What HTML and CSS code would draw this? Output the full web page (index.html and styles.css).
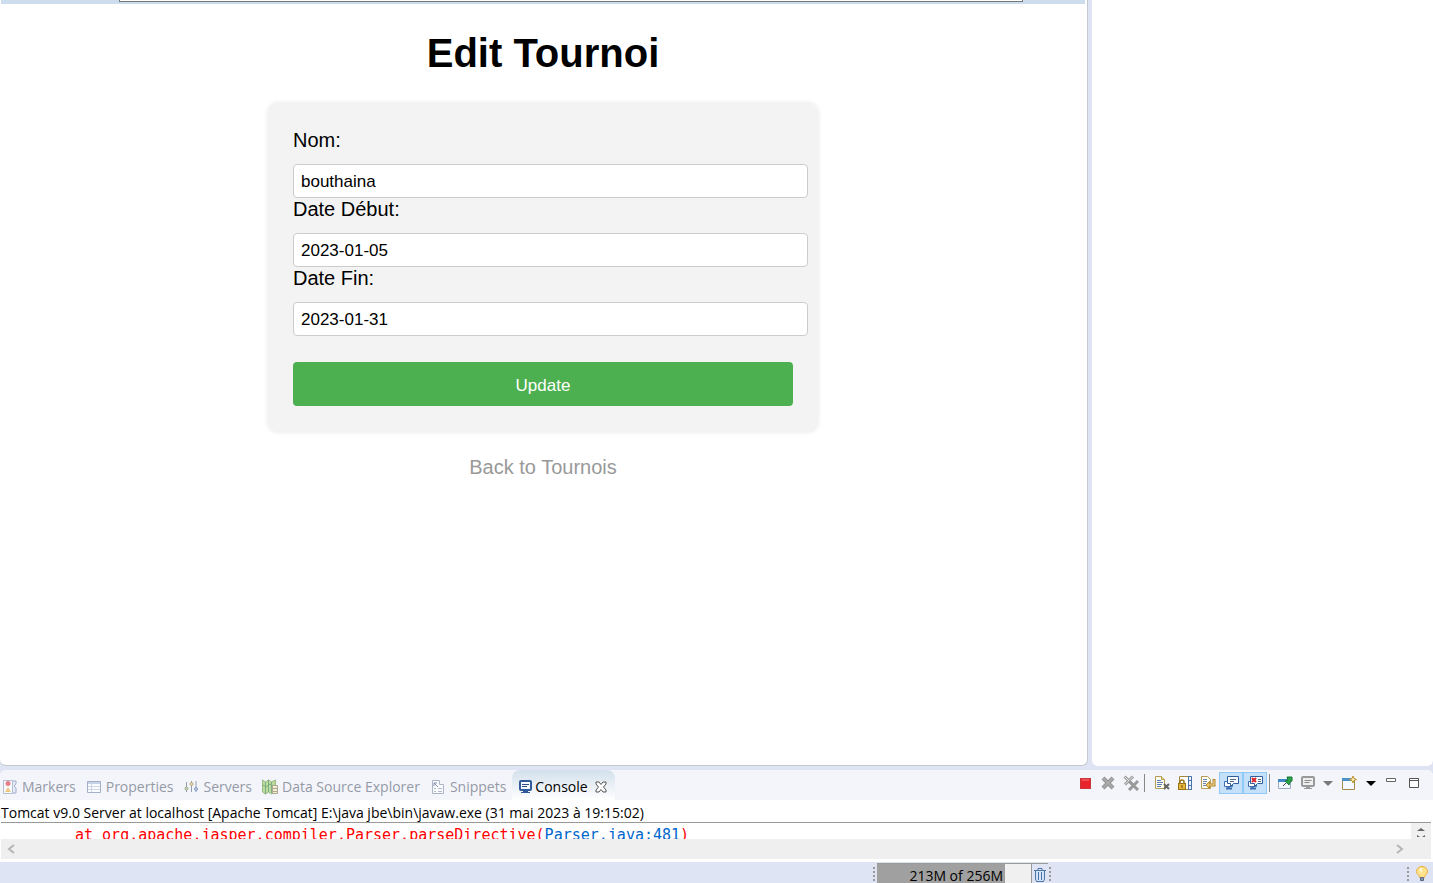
FILE: index.html
```html
<!DOCTYPE html>
<html lang="fr">
<head>
<meta charset="utf-8">
<title>Edit Tournoi</title>
<link rel="stylesheet" href="styles.css">
</head>
<body>
<div class="workbench">
  <div class="top">
    <section class="browser">
      <div class="address-strip"><div class="address-box"></div></div>
      <main class="page">
        <h1>Edit Tournoi</h1>
        <form class="card">
          <label for="nom">Nom:</label>
          <input id="nom" type="text" value="bouthaina">
          <label for="debut">Date Début:</label>
          <input id="debut" type="text" value="2023-01-05">
          <label for="fin">Date Fin:</label>
          <input id="fin" type="text" value="2023-01-31">
          <button class="update" type="button">Update</button>
        </form>
        <a class="back" href="#">Back to Tournois</a>
      </main>
    </section>
    <aside class="side"></aside>
  </div>

  <section class="console">
    <header class="tabbar">
      <nav class="tabs">
        <button class="tab" type="button">
          <svg class="dim" width="16" height="16" viewBox="0 0 16 16"><path d="M1.500 1.500h9v13h-9z" fill="#fff" stroke="#8799b8"/><path d="M11 2h3v3l-2 2 2 2v5h-3" fill="#dfe7f4" stroke="#6b7fae"/><circle cx="6" cy="4.500" r="2.500" fill="#d9343a"/><path d="M3 13l3-5 3 5z" fill="#e8a93a"/></svg>
          <span>Markers</span></button>
        <button class="tab" type="button">
          <svg class="dim" width="16" height="16" viewBox="0 0 16 16"><path d="M1.500 2.500h13v11h-13z" fill="#fff" stroke="#6d83a8"/><path d="M2 3h12v2H2z" fill="#a9bddb"/><path d="M5.500 5v8M2 7.500h12M2 10.500h12" stroke="#b5c4dc"/></svg>
          <span>Properties</span></button>
        <button class="tab" type="button">
          <svg class="dim" width="16" height="16" viewBox="0 0 16 16"><path d="M3.500 3v10M8.500 2v11M13 2v11" stroke="#56627c"/><circle cx="3.500" cy="9.500" r="1.500" fill="#b3d182" stroke="#58703d"/><circle cx="8.500" cy="5" r="1.500" fill="#efd06e" stroke="#8e732c"/><circle cx="13" cy="10" r="1.500" fill="#8eb4e0" stroke="#3f639b"/></svg>
          <span>Servers</span></button>
        <button class="tab" type="button">
          <svg class="dim" width="16" height="16" viewBox="0 0 16 16"><path d="M.5 1l3 2 3-2 3 2 4-2v12l-4 2-3-2-3 2-3-2z" fill="#9ad05a" stroke="#5b9236"/><path d="M3.500 3v12M6.500 1v12M9.500 3v11M1 6l3 2 4-3 4 2" fill="none" stroke="#2e7b38"/><path d="M10.500 6.500h5v8h-5z" fill="#f1e8bd" stroke="#817747"/><path d="M11 9.500h4M11 12.500h4" stroke="#817747"/></svg>
          <span>Data Source Explorer</span></button>
        <button class="tab" type="button">
          <svg class="dim" width="16" height="16" viewBox="0 0 16 16"><path d="M2.500 1.500h7v4h4v9h-11z" fill="#fff" stroke="#7d8aa5"/><path d="M4 4h3M4 4v3M4 4l4 4" stroke="#39527f" fill="none"/><path d="M4 9.500h2M8 9.500h4M4 12.500h2M8 12.500h4" stroke="#8893ac"/></svg>
          <span>Snippets</span></button>
        <button class="tab active" type="button">
          <svg width="16" height="16" viewBox="0 0 16 16"><rect x="3" y="2" width="11" height="9" rx="1" fill="#f4f8ff" stroke="#315a9d" stroke-width="2"/><path d="M5 5.500h7M5 7.500h5" stroke="#334f83"/><path d="M6 12h5v1h2v1H4v-1h2z" fill="#315a9d"/></svg>
          <span>Console</span>
          <svg class="close" width="12" height="12" viewBox="0 0 12 12"><path d="M1 1h3l2 2.500L8 1h3v2L8.500 6 11 9v2H8L6 8.500 4 11H1V9l2.500-3L1 3z" fill="#fff" stroke="#555"/></svg>
        </button>
      </nav>
      <div class="toolbar">
        <button type="button" aria-label="Terminate"><svg width="16" height="16" viewBox="0 0 16 16"><rect x="3.500" y="3.500" width="10" height="10" fill="#e9242d" stroke="#c9373a"/><path d="M5 5h7" stroke="#f57878"/></svg></button>
        <button type="button" aria-label="Remove launch"><svg width="16" height="16" viewBox="0 0 16 16"><path d="M3 3l10 10M13 3L3 13" stroke="#929292" stroke-width="4"/><path d="M3 3l10 10M13 3L3 13" stroke="#aaa" stroke-width="2"/></svg></button>
        <button type="button" aria-label="Remove all terminated"><svg width="16" height="16" viewBox="0 0 16 16"><path d="M1.500 1.500l8 8M10 1.500l-8 8" stroke="#999" stroke-width="3"/><path d="M1.500 1.500l8 8M10 1.500l-8 8" stroke="#eee"/><path d="M6 6l9 9M15 6l-9 9" stroke="#999" stroke-width="3"/></svg></button>
        <i class="sep"></i>
        <button type="button" aria-label="Clear console"><svg width="16" height="16" viewBox="0 0 16 16"><path d="M1.500 1.500h6l3 3v9h-9z" fill="#fffdf0" stroke="#b59a55"/><path d="M7.500 1.500v3h3" fill="#e9d79d" stroke="#b59a55"/><path d="M3 5.500h4M3 7.500h6M3 9.500h5M3 11.500h4" stroke="#5c7db0"/><path d="M10 9l5 5M15 9l-5 5" stroke="#666" stroke-width="2"/></svg></button>
        <button type="button" aria-label="Scroll lock"><svg width="16" height="16" viewBox="0 0 16 16"><path d="M2.500 1.500h12v13h-12z" fill="#fff" stroke="#a6873e"/><path d="M11.500 1.500h3v13h-3z" fill="#edf4ff" stroke="#4771a8"/><path d="M12 5.500h2M12 10.500h2" stroke="#4771a8"/><path d="M3 9V7a2 2 0 0 1 4 0v2" fill="none" stroke="#9a741d" stroke-width="1.500"/><rect x="1.500" y="8.500" width="7" height="6" fill="#e7b73d" stroke="#99701a"/><path d="M5 10v3" stroke="#765313"/></svg></button>
        <button type="button" aria-label="Word wrap"><svg width="16" height="16" viewBox="0 0 16 16"><path d="M1.500 1.500h6l3 3v9h-9z" fill="#fffdf0" stroke="#b59a55"/><path d="M3 4.500h4M3 6.500h4M3 8.500h3M3 10.500h3" stroke="#6a87b5"/><path d="M14 4v6H9" fill="none" stroke="#b6862a" stroke-width="3"/><path d="M9.500 6.500v7L6 10z" fill="#f0c65b" stroke="#b6862a"/><path d="M14 5v5H9" fill="none" stroke="#f0dc9b"/></svg></button>
        <button class="on" type="button" aria-label="Show on output"><svg width="16" height="16" viewBox="0 0 16 16"><path d="M1.500 6.500h8v5h-8z" fill="#fff" stroke="#3d6eae"/><path d="M3 13.500h6M5.500 12v1" stroke="#3d6eae" stroke-width="2"/><path d="M4.500 1.500h11v7h-5l-3 3v-3h-3z" fill="#f8fbff" stroke="#315f9d"/><path d="M7 4.500h6M7 6.500h4" stroke="#546887"/></svg></button>
        <button class="on" type="button" aria-label="Show on error"><svg width="16" height="16" viewBox="0 0 16 16"><path d="M1.500 6.500h8v5h-8z" fill="#fff" stroke="#3d6eae"/><path d="M3 13.500h6M5.500 12v1" stroke="#3d6eae" stroke-width="2"/><path d="M3.500 1.500h12v7h-5l-3 3v-3h-4z" fill="#f8fbff" stroke="#315f9d"/><path d="M5 3l4 4M9 3L5 7" stroke="#db252c" stroke-width="2"/><path d="M11 4.500h3M11 6.500h3" stroke="#546887"/></svg></button>
        <i class="sep"></i>
        <button type="button" aria-label="Pin console"><svg width="16" height="16" viewBox="0 0 16 16"><path d="M1.500 4.500h12v9h-12z" fill="#f4f9ff" stroke="#9aabc4"/><path d="M1 4h13v3H1z" fill="#4189c6"/><path d="M6 11l4-4" stroke="#444"/><path d="M10 2h5v4l-2 1-1 3-4-4 3-1z" fill="#2ba549" stroke="#187534"/></svg></button>
        <button type="button" aria-label="Display console"><svg width="16" height="16" viewBox="0 0 16 16"><rect x="2" y="2" width="12" height="9" rx="1" fill="#eee" stroke="#999" stroke-width="2"/><path d="M4.500 5.500h7M4.500 7.500h5" stroke="#888"/><path d="M6 12h4v1h2v1H4v-1h2z" fill="#999"/></svg></button>
        <button class="arrow gray" type="button" aria-label="Console list"><svg width="10" height="5" viewBox="0 0 10 5"><path d="M0 0h10L5 5z" fill="currentColor"/></svg></button>
        <button class="wide" type="button" aria-label="Open console"><svg width="16" height="16" viewBox="0 0 16 16"><path d="M1.500 3.500h12v11h-12z" fill="#f4f9ff" stroke="#a98b48"/><path d="M1 3h13v3H1z" fill="#4b91ca"/><path d="M12 1l1 2.500 2.500 1L13 5.500 12 8l-1-2.500-2.500-1 2.500-1z" fill="#fff2ac" stroke="#bd922d"/></svg></button>
        <button class="arrow" type="button" aria-label="Open console menu"><svg width="10" height="5" viewBox="0 0 10 5"><path d="M0 0h10L5 5z" fill="currentColor"/></svg></button>
        <button type="button" aria-label="Minimize"><svg width="16" height="16" viewBox="0 0 16 16"><path d="M3.500 3.500h9v3h-9z" fill="#fff" stroke="#666"/></svg></button>
        <button type="button" aria-label="Maximize"><svg width="16" height="16" viewBox="0 0 16 16"><path d="M3.500 3.500h9v9h-9zM3.500 5.500h9" fill="#fff" stroke="#555"/></svg></button>
      </div>
    </header>
    <p class="process">Tomcat v9.0 Server at localhost [Apache Tomcat] E:\java jbe\bin\javaw.exe (31 mai 2023 à 19:15:02)</p>
    <div class="output">
      <pre>at org.apache.jasper.compiler.Parser.parseDirective(<a href="#">Parser.java:481</a>)</pre>
      <div class="vscroll"><svg width="10" height="14" viewBox="0 0 10 14"><path d="M1 4l4-3 4 3z" fill="#666"/><path d="M1 8v2h3zM9 8v2H6z" fill="#666"/></svg></div>
    </div>
    <div class="hscroll">
      <svg width="8" height="10" viewBox="0 0 8 10"><path d="M7 1L2 5l5 4" fill="none" stroke="#b5b5b5" stroke-width="2"/></svg>
      <svg width="8" height="10" viewBox="0 0 8 10"><path d="M1 1l5 4-5 4" fill="none" stroke="#b5b5b5" stroke-width="2"/></svg>
    </div>
  </section>

  <footer class="status">
    <i class="grip"></i>
    <div class="heap">213M of 256M</div>
    <button class="trash" type="button" aria-label="Run garbage collector"><svg width="14" height="16" viewBox="0 0 14 16"><path d="M1 3.500h12M5 3V1.500h4V3" fill="none" stroke="#4c75aa"/><path d="M2.500 4v8l1 2.500h7l1-2.500V4" fill="#d4e2f5" stroke="#4c75aa"/><path d="M5.500 5v8M8.500 5v8" stroke="#4c75aa"/></svg></button>
    <i class="grip"></i>
    <span class="fill"></span>
    <i class="grip"></i>
    <button class="tip" type="button" aria-label="Tip"><svg width="14" height="18" viewBox="0 0 14 18"><path d="M4.500 11.500c0-3-3-3-3-6a5.500 5 0 0 1 11 0c0 3-3 3-3 6z" fill="#ffe28b" stroke="#e6ae3c"/><path d="M4 4a3 3 0 0 1 3-2v5z" fill="#fff8d9"/><path d="M5.500 11.500h3v3h-3z" fill="#8796ae" stroke="#586983"/></svg></button>
  </footer>
</div>
</body>
</html>
```
FILE: styles.css
```css
* { box-sizing: border-box; }
body { margin: 0; font-family: "Liberation Sans", Arial, sans-serif; color: #000; }
button { padding: 0; border: 0; background: none; font: inherit; color: inherit; }
svg { display: block; flex: none; }

.workbench { display: flex; flex-direction: column; height: 100vh; background: #dfe4f5; }
.top { flex: 1; min-height: 0; display: flex; gap: 4px; padding-bottom: 4px; }
.browser { flex: 1; background: #fff; border: solid #c4c8d0; border-width: 0 1px 1px 0; border-radius: 0 0 6px 6px; overflow: hidden; }
.side { flex: 0 0 341px; background: #fff; border-radius: 0 0 6px 6px; }
.address-strip { height: 4px; margin: 0 2px 0 1px; padding: 0 62px 0 118px; background: #cddded; }
.address-box { height: 2px; background: #fff; border: solid #777; border-width: 0 1px 1px; }

.page { display: flex; flex-direction: column; align-items: center; padding-right: 1px; font-size: 20px; line-height: 23px; }
h1 { margin: 26px 0 27px; font-size: 40px; line-height: 46px; }
.card { width: 550px; padding: 26px 25px; display: flex; flex-direction: column; align-items: flex-start; background: #f3f3f3; border-radius: 10px; box-shadow: 0 0 5px rgba(0, 0, 0, 0.1); }
.card label { margin-bottom: 12px; }
.card input { width: 515px; height: 34px; padding: 2px 7px 0; border: 1px solid #ccc; border-radius: 4px; background: #fff; font: 17px "Liberation Sans", Arial, sans-serif; color: #000; }
.update { width: 100%; height: 44px; margin-top: 26px; padding-top: 2px; border-radius: 4px; background: #4caf50; color: #fff; font-size: 17px; }
.back { margin-top: 24px; color: #999; text-decoration: none; }

.console { background: #fff; border-radius: 6px 6px 0 0; font-family: "Open Sans", "Noto Sans", sans-serif; padding-bottom: 3px; }
.tabbar { display: flex; justify-content: space-between; height: 30px; background: #f4f5fb; border-radius: 6px 6px 0 0; }
.tabs { display: flex; padding-left: 2px; gap: 10px; }
.tab { display: flex; align-items: center; gap: 4px; padding-top: 3px; color: #949aa6; font-size: 14px; white-space: nowrap; }
.tab.active { gap: 2px; margin-left: -4px; padding: 3px 8px 0 5px; border-radius: 8px 8px 0 0; background: linear-gradient(#d3e0eb, #fff); color: #000; }
.close { margin-left: 5px; }
.dim { opacity: 0.6; }
.toolbar { display: flex; align-items: center; padding: 0 8px 4px 0; }
.toolbar button { display: flex; align-items: center; justify-content: center; width: 23px; height: 22px; }
.toolbar .on { width: 24px; border: 1px solid #90c8f6; background: #c5e0f9; }
.toolbar .arrow { width: 17px; }
.toolbar .wide { width: 26px; }
.toolbar .gray { color: #777; }
.sep { width: 6px; height: 18px; border-left: 1px solid #888; margin-left: 2px; }
.on + .sep { width: 4px; }

.process { margin: 0 2px 0 1px; height: 23px; line-height: 25px; font-size: 14px; border-bottom: 1px solid #999; white-space: nowrap; }
.output { display: flex; justify-content: space-between; height: 16px; margin: 0 2px 0 1px; overflow: hidden; }
.output pre { margin: 0; padding-left: 74px; font: 15px/24px "DejaVu Sans Mono", monospace; color: #f00; }
.output a { color: #0066cc; text-decoration: none; }
.vscroll { width: 20px; display: flex; align-items: flex-start; justify-content: center; padding-top: 4px; background: #f0f0f0; }
.hscroll { display: flex; align-items: center; justify-content: space-between; height: 20px; margin: 0 2px 0 1px; padding: 0 27px 0 6px; background: #efefef; }

.status { display: flex; height: 21px; padding: 1px 4px 0 0; font-family: "Open Sans", "Noto Sans", sans-serif; }
.status .grip:first-child { margin-left: auto; }
.grip { width: 2px; margin: 4px 2px 0 1px; background: repeating-linear-gradient(#999 0 2px, transparent 2px 4px); }
.heap { width: 154px; padding-right: 28px; border-top: 1px solid #999; background: linear-gradient(90deg, #a0a0a0 128px, #f0f0f0 128px); font-size: 14px; line-height: 23px; text-align: right; white-space: nowrap; }
.trash { width: 17px; border: solid #999; border-width: 1px 0 0 1px; padding: 3px 1px 0; overflow: hidden; }
.fill { width: 353px; }
.tip { padding: 3px 0 0 4px; overflow: hidden; }
```
